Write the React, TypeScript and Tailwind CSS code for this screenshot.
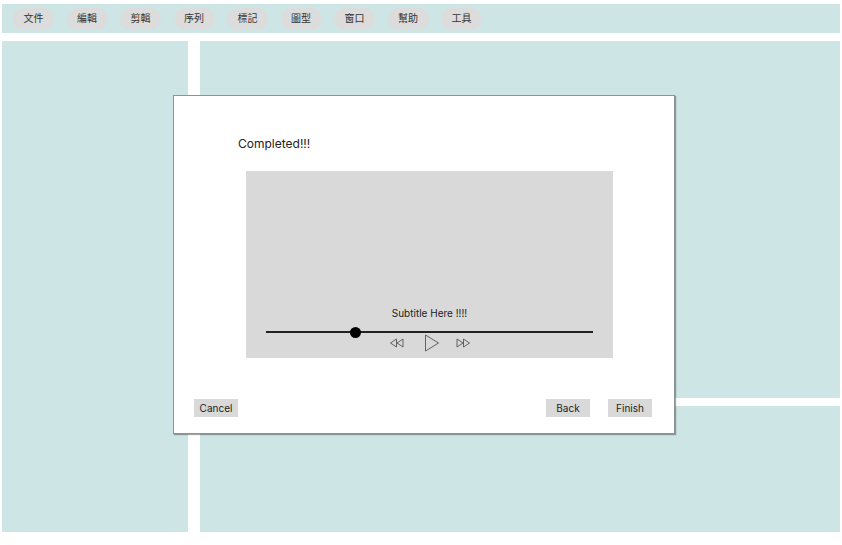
import React from "react";

const menus = ["文件", "編輯", "剪輯", "序列", "標記", "圖型", "窗口", "幫助", "工具"];

function Rewind() {
  return (
    <svg width="16" height="10" viewBox="0 0 16 10" fill="none" stroke="#555" strokeWidth="0.9">
      <path d="M7.5 1 L1.5 5 L7.5 9 Z" />
      <path d="M14 1 L8 5 L14 9 Z" />
    </svg>
  );
}

function Forward() {
  return (
    <svg width="16" height="10" viewBox="0 0 16 10" fill="none" stroke="#555" strokeWidth="0.9">
      <path d="M2 1 L8 5 L2 9 Z" />
      <path d="M8.5 1 L14.5 5 L8.5 9 Z" />
    </svg>
  );
}

function Play() {
  return (
    <svg width="16" height="18" viewBox="0 0 16 18" fill="none" stroke="#555" strokeWidth="0.9">
      <path d="M1.5 1 L14.5 9 L1.5 17 Z" />
    </svg>
  );
}

export default function App() {
  return (
    <div
      className="relative w-[842px] h-[545px] bg-white overflow-hidden"
      style={{ fontFamily: "Inter, 'Noto Sans CJK TC', sans-serif" }}
    >
      <div className="mt-[4px] mx-[2px] h-[29px] bg-[#cee5e5] flex items-center pl-[11px] gap-[12.5px]">
        {menus.map((m) => (
          <div
            key={m}
            className="w-[41px] h-[22px] rounded-full bg-[#dcdcdc] flex items-center justify-center text-[10px] text-[#333]"
          >
            {m}
          </div>
        ))}
      </div>

      <div className="mt-[8px] mx-[2px] flex gap-[12px] h-[491px]">
        <div className="w-[186px] bg-[#cee5e5]" />
        <div className="flex-1 flex flex-col gap-[8px]">
          <div className="h-[357px] bg-[#cee5e5]" />
          <div className="flex-1 bg-[#cee5e5]" />
        </div>
      </div>

      <div className="absolute left-[173px] top-[95px] w-[502px] h-[339px] bg-white border border-[#8a9696] shadow-[1px_1px_1px_rgba(0,0,0,0.35)] flex flex-col">
        <div className="pl-[64px] pt-[40px] text-[12px] text-[#222] leading-[16px]">Completed!!!</div>
        <div className="ml-[72px] mt-[19px] w-[367px] h-[187px] bg-[#d9d9d9] flex flex-col items-center justify-end pb-[6px]">
          <div className="text-[10px] text-[#222] leading-[12px]">Subtitle Here !!!!</div>
          <div className="relative mt-[12px] w-[327px] h-[2px] bg-[#222]">
            <div className="absolute left-[84px] top-[-4.5px] w-[11px] h-[11px] rounded-full bg-black" />
          </div>
          <div className="mt-[1px] flex items-center">
            <Rewind />
            <div className="ml-[19px] mr-[15px] flex">
              <Play />
            </div>
            <Forward />
          </div>
        </div>
        <div className="mt-auto mb-[16px] ml-[20px] mr-[22px] flex items-center justify-between">
          <div className="w-[44px] h-[18px] bg-[#d9d9d9] flex items-center justify-center text-[10px] text-[#222]">
            Cancel
          </div>
          <div className="flex gap-[18px]">
            <div className="w-[44px] h-[18px] bg-[#d9d9d9] flex items-center justify-center text-[10px] text-[#222]">
              Back
            </div>
            <div className="w-[44px] h-[18px] bg-[#d9d9d9] flex items-center justify-center text-[10px] text-[#222]">
              Finish
            </div>
          </div>
        </div>
      </div>
    </div>
  );
}
